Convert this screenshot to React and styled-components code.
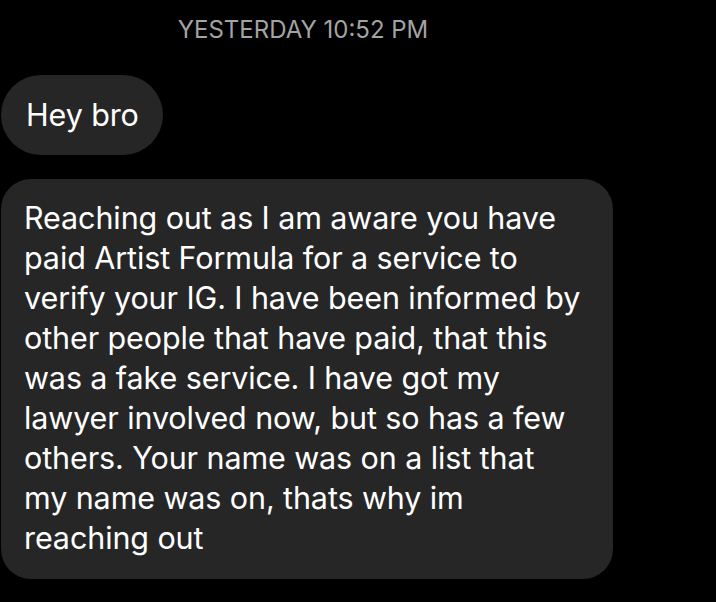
import React from "react";
import styled, { createGlobalStyle } from "styled-components";

const Global = createGlobalStyle`
  html, body { margin: 0; padding: 0; background: #000; }
  body { font-family: Inter, Roboto, "Liberation Sans", sans-serif; }
`;

const Screen = styled.div`
  width: 716px;
  height: 602px;
  background: #000;
  display: flex;
  flex-direction: column;
  align-items: flex-start;
  padding: 14px 0 0 1px;
  box-sizing: border-box;
  overflow: hidden;
`;

const Stamp = styled.div`
  width: 604px;
  text-align: center;
  color: #a3a3a3;
  font-size: 24px;
  line-height: 32px;
  letter-spacing: 0;
  margin-bottom: 29px;
`;

const Bubble = styled.div`
  background: #262626;
  color: #fff;
  font-size: 30.5px;
  line-height: 40px;
  letter-spacing: -0.1px;
  box-sizing: border-box;
  white-space: nowrap;
  border-radius: ${(p) => (p.$pill ? "40px" : "30px")};
  padding: ${(p) => (p.$pill ? "20px 24px 20px 25px" : "19px 0 21px 23px")};
  width: ${(p) => p.$width || "auto"};
  margin-bottom: 24px;
`;

const lines = [
  "Reaching out as I am aware you have",
  "paid Artist Formula for a service to",
  "verify your IG. I have been informed by",
  "other people that have paid, that this",
  "was a fake service. I have got my",
  "lawyer involved now, but so has a few",
  "others. Your name was on a list that",
  "my name was on, thats why im",
  "reaching out",
];

export default function App() {
  return (
    <>
      <Global />
      <Screen>
        <Stamp>YESTERDAY 10:52 PM</Stamp>
        <Bubble $pill>Hey bro</Bubble>
        <Bubble $width="612px">
          {lines.map((l, i) => (
            <React.Fragment key={i}>
              {l}
              {i < lines.length - 1 && <br />}
            </React.Fragment>
          ))}
        </Bubble>
      </Screen>
    </>
  );
}
